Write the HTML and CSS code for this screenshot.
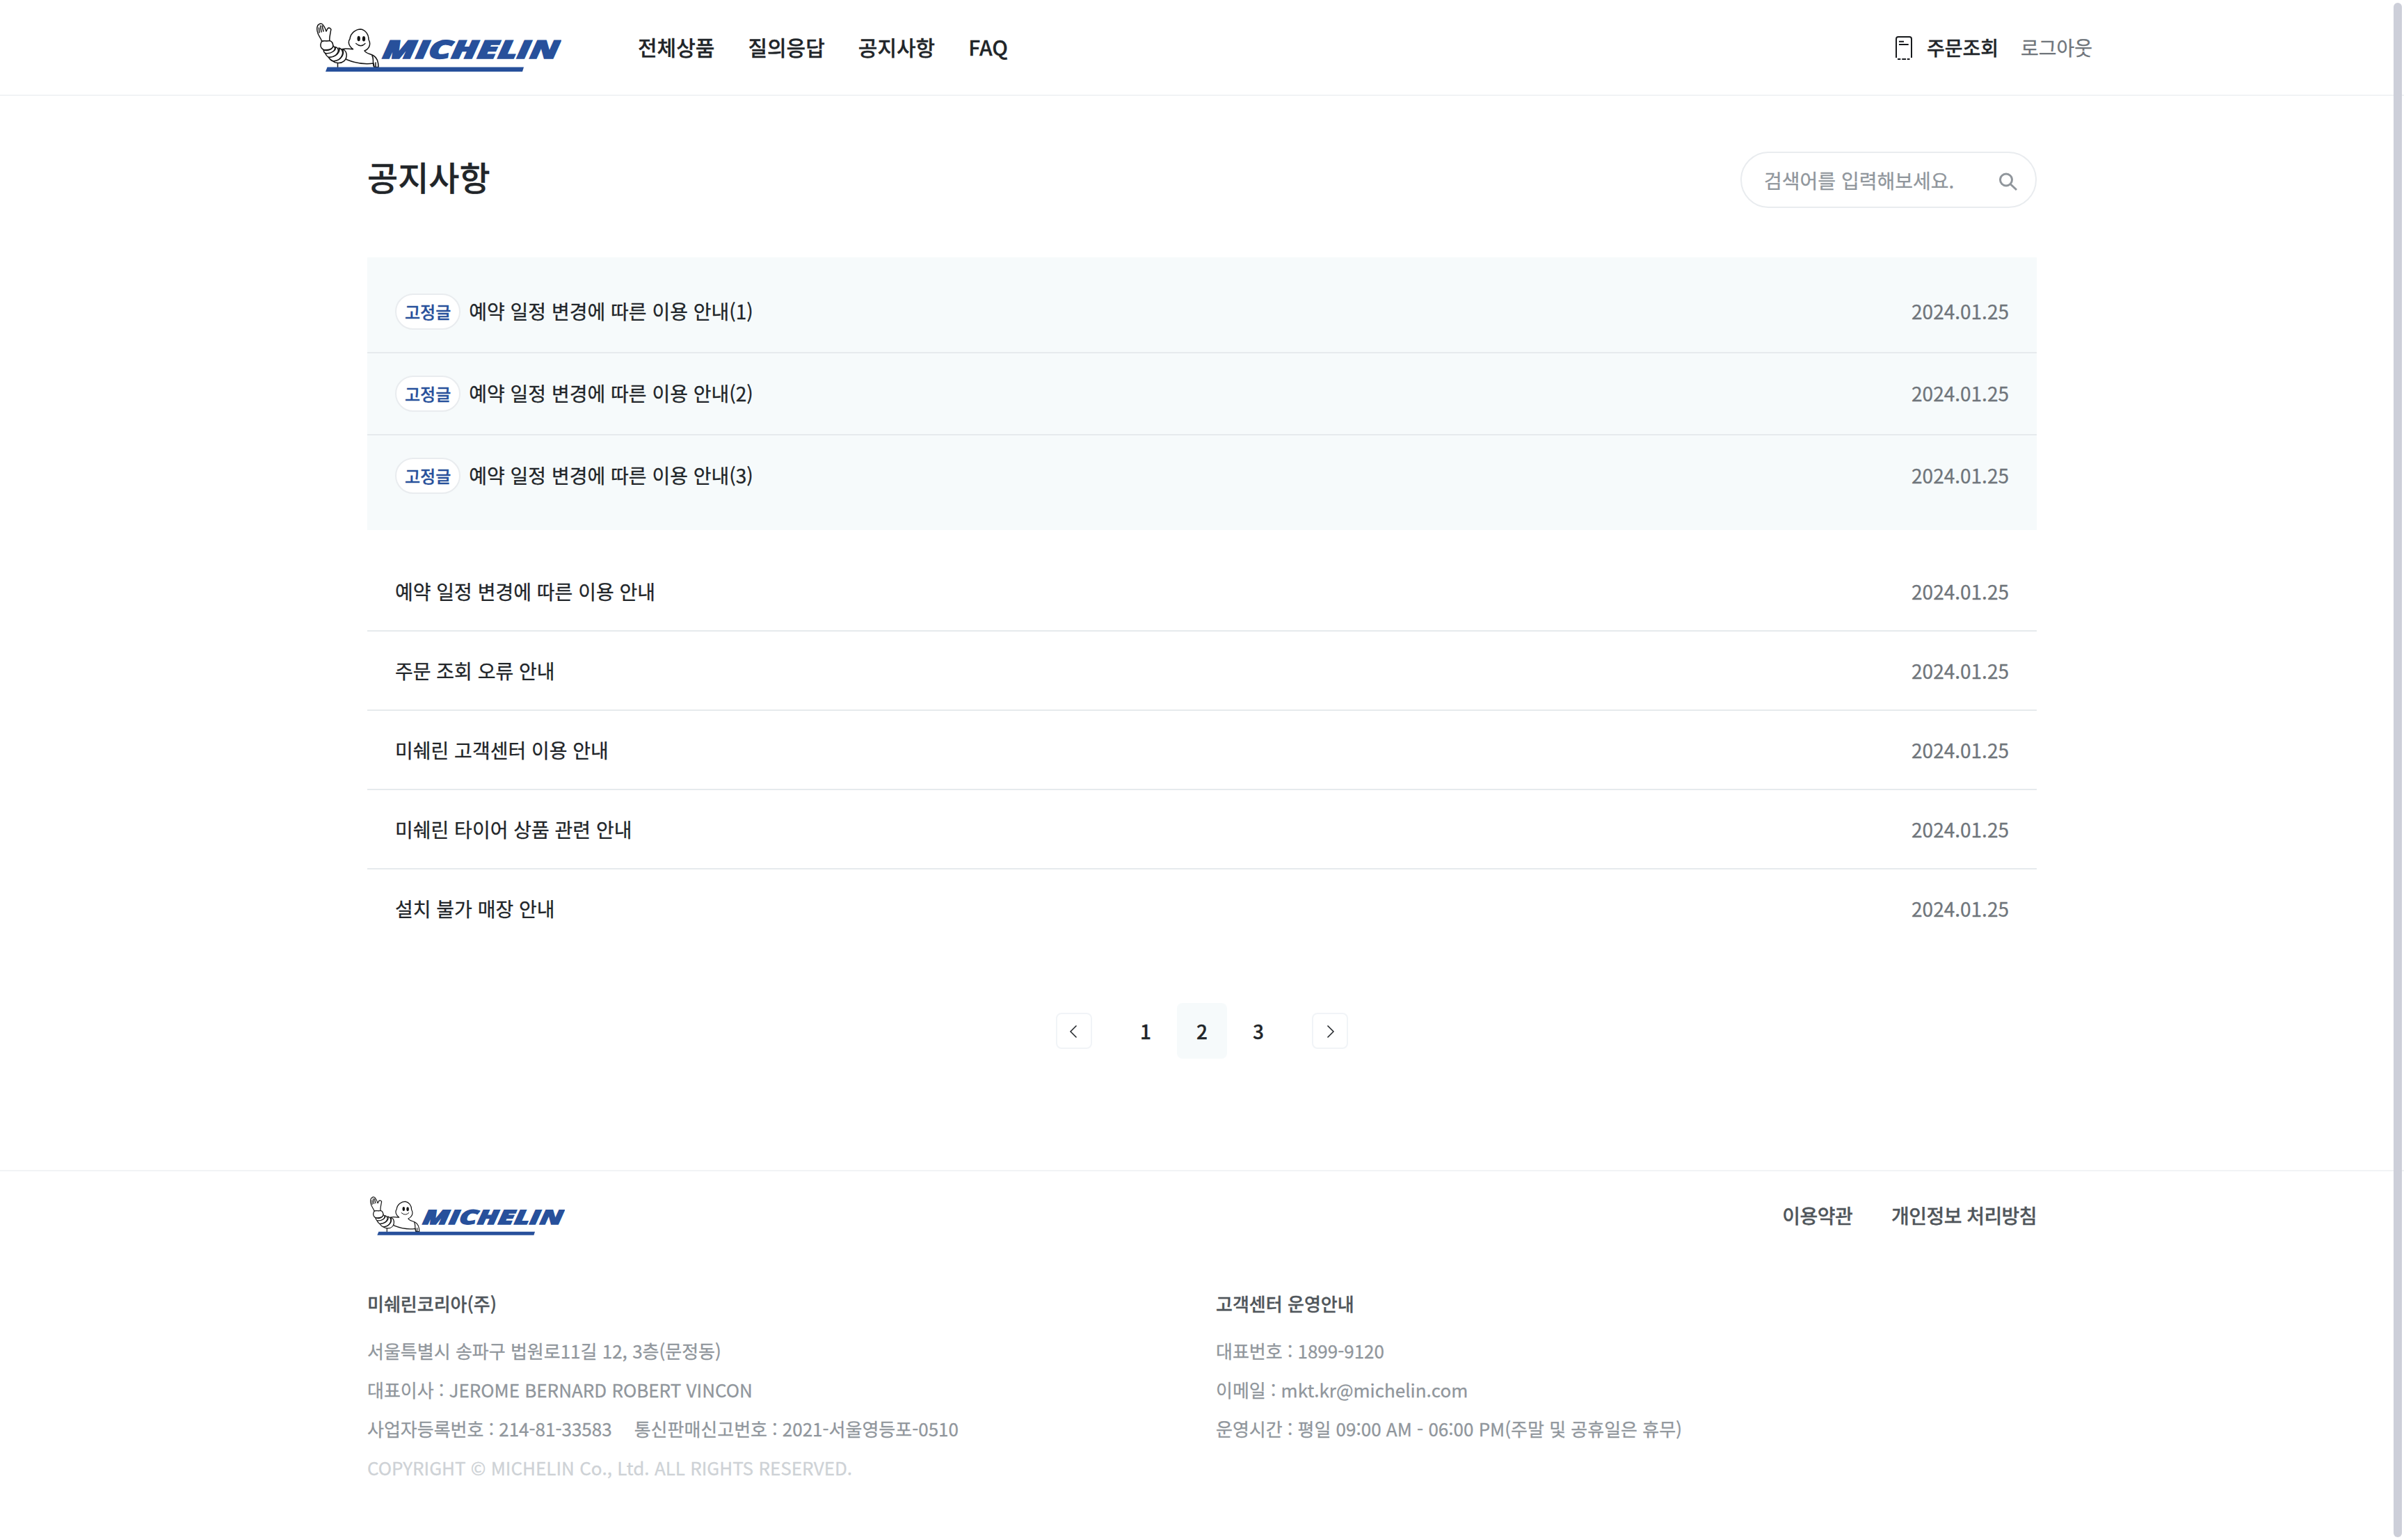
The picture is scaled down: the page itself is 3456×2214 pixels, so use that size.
FILE: index.html
```html
<!DOCTYPE html>
<html lang="ko">
<head>
<meta charset="utf-8">
<title>공지사항</title>
<link rel="stylesheet" href="styles.css">
</head>
<body>
<svg class="sprite" aria-hidden="true">
  <symbol id="logo" viewBox="0 0 352 70">
    <g fill="#fff" stroke="#151515" stroke-width="1.5" stroke-linejoin="round" stroke-linecap="round">
      <path d="M30.500 64V55H46V64Z" stroke="none"/>
      <path fill="none" d="M30.500 56V63.500"/>
      <path d="M38 37.500C43 36 48 38 52.500 37.700C46 33 45 27 48 23C49 14 57 9 63.500 9C70 10 75 16 75 24C79 31 75 38 69 40C71 44 77 44 82 47C87 50 89 57 89 63.500H83L82 58C68 60 54 57 43 52.500Z"/>
      <path d="M7.500 26C6 21 2 18 1.500 13C0 8 1 3 3.500 2C6 0 9 1 10 4C12 6 13 9 14 12L16 8C18 6 22 8 20.500 11C20 16 18 21 19 26Z"/>
      <path d="M6.700 28C8 24 15 27 18.500 25.500C23 26 24 31 24 35C20 39 14 39 10 38.500C6 36 5 32 6.700 28Z"/>
      <path d="M10 38.500C16 41 23 38 24 33C31 37 22 46 12.500 43.500C10.500 42 10 40 10 38.500Z"/>
      <path d="M12.500 43.500C21 45 29 39 27 34.500C35 36 32 49 17.500 49.500C15 48 13.500 46 12.500 43.500Z"/>
      <path d="M17.500 49.500C29 49 35 41 32 36C42 38 38 54 24 55C21 54 19 52 17.500 49.500Z"/>
      <path d="M24 55C36 54 41 44 37 37.500C47 40 45 58 31.500 57.500C29 57.500 26 57 24 55Z"/>
      <path fill="none" d="M4 14L3.500 7M7 13L5.500 4M10 12L8 4M80 47C83 52 80 56 82.500 63M85 57V63"/>
      <path fill="none" stroke-width="1.2" d="M56.700 29.500Q64 36 70 29.500"/>
    </g>
    <ellipse cx="60.700" cy="22.500" rx="2.200" ry="3.800" fill="#151515"/>
    <ellipse cx="68" cy="22.700" rx="2.200" ry="3.800" fill="#151515"/>
    <path fill="#27509b" d="M15.500 63.500H298L296 70H13Z"/>
    <text class="wordmark" transform="translate(94 50.700) skewX(-8)" x="0" y="0" textLength="253" lengthAdjust="spacingAndGlyphs">MICHELIN</text>
  </symbol>
</svg>

<header class="header">
  <div class="header-inner">
    <a class="logo"><svg><use href="#logo"/></svg></a>
    <nav class="nav"><a>전체상품</a><a>질의응답</a><a>공지사항</a><a>FAQ</a></nav>
    <div class="user">
      <svg class="order-icon" viewBox="0 0 24 34" fill="none" stroke="#17191c" stroke-width="2"><path d="M1 31V4Q1 1 4 1H20Q23 1 23 4V31M5 7.700H12M5 12H18.700M3 33H7.300M9.300 33H15M16.700 33H20.500"/></svg>
      <a class="order">주문조회</a>
      <a class="logout">로그아웃</a>
    </div>
  </div>
</header>

<main class="main">
  <div class="title-row">
    <h1>공지사항</h1>
    <div class="search">
      <span>검색어를 입력해보세요.</span>
      <svg viewBox="0 0 28 28" fill="none" stroke="#90969c" stroke-width="3"><circle cx="11" cy="13.500" r="8.500"/><path d="M17 19.500L26 28"/></svg>
    </div>
  </div>

  <ul class="list pinned">
    <li><span class="badge">고정글</span><a>예약 일정 변경에 따른 이용 안내(1)</a><time>2024.01.25</time></li>
    <li><span class="badge">고정글</span><a>예약 일정 변경에 따른 이용 안내(2)</a><time>2024.01.25</time></li>
    <li><span class="badge">고정글</span><a>예약 일정 변경에 따른 이용 안내(3)</a><time>2024.01.25</time></li>
  </ul>
  <ul class="list normal">
    <li><a>예약 일정 변경에 따른 이용 안내</a><time>2024.01.25</time></li>
    <li><a>주문 조회 오류 안내</a><time>2024.01.25</time></li>
    <li><a>미쉐린 고객센터 이용 안내</a><time>2024.01.25</time></li>
    <li><a>미쉐린 타이어 상품 관련 안내</a><time>2024.01.25</time></li>
    <li><a>설치 불가 매장 안내</a><time>2024.01.25</time></li>
  </ul>

  <div class="pagination">
    <a class="arrow prev"><svg viewBox="0 0 10 18"><path d="M9.500 0.500L1 9L9.500 17.500"/></svg></a>
    <div class="pages"><a>1</a><a class="active">2</a><a>3</a></div>
    <a class="arrow next"><svg viewBox="0 0 10 18"><path d="M0.500 0.500L9 9L0.500 17.500"/></svg></a>
  </div>
</main>

<footer class="footer">
  <div class="footer-inner">
    <div class="footer-top">
      <a class="footer-logo"><svg><use href="#logo"/></svg></a>
      <div class="links"><a>이용약관</a><a>개인정보 처리방침</a></div>
    </div>
    <div class="info">
      <section>
        <h2>미쉐린코리아(주)</h2>
        <p>서울특별시 송파구 법원로11길 12, 3층(문정동)</p>
        <p>대표이사 : JEROME BERNARD ROBERT VINCON</p>
        <p class="split"><span>사업자등록번호 : 214-81-33583</span><span>통신판매신고번호 : 2021-서울영등포-0510</span></p>
        <p class="copyright">COPYRIGHT © MICHELIN Co., Ltd. ALL RIGHTS RESERVED.</p>
      </section>
      <section>
        <h2>고객센터 운영안내</h2>
        <p>대표번호 : 1899-9120</p>
        <p>이메일 : mkt.kr@michelin.com</p>
        <p>운영시간 : 평일 09:00 AM - 06:00 PM(주말 및 공휴일은 휴무)</p>
      </section>
    </div>
  </div>
</footer>
<div class="scrollbar"></div>
</body>
</html>
```
FILE: styles.css
```css
* { box-sizing: border-box; }
body {
  margin: 0;
  height: 2214px;
  overflow: hidden;
  background: #fff;
  color: #212529;
  font-family: "Noto Sans CJK KR", sans-serif;
  font-size: 28px;
  line-height: 48px;
  -webkit-text-stroke-width: 0.3px;
}
h1, h2, p, ul { margin: 0; padding: 0; }
ul { list-style: none; }
svg { display: block; overflow: visible; }
.sprite { position: absolute; width: 0; height: 0; }
.wordmark { font: italic 900 36px "Open Sans", sans-serif; fill: #27509b; stroke: #27509b; stroke-width: 1.6px; }

.header { height: 138px; border-bottom: 2px solid #f1f3f5; }
.header-inner { width: 2560px; height: 136px; margin: 0 auto; display: flex; align-items: center; }
.logo { margin-left: 7px; width: 352px; }
.logo svg { width: 352px; height: 70px; }
.nav { display: flex; gap: 48px; margin-left: 110px; padding-bottom: 2px; font-size: 30px; font-weight: 500; }
.user { display: flex; align-items: center; margin-left: auto; }
.order-icon { width: 24px; height: 34px; margin: 2px 21px 0 0; }
.order { font-weight: 500; margin-right: 32px; }
.logout { color: #6f757b; }

.main { width: 2400px; margin: 0 auto; }
.title-row { height: 232px; padding-top: 80px; display: flex; justify-content: space-between; align-items: flex-start; }
h1 { font-size: 48px; font-weight: 500; line-height: 70px; }
.search {
  width: 426px; height: 81px; padding: 0 25px 0 32px;
  border: 2px solid #e9ecef; border-radius: 41px;
  display: flex; align-items: center; justify-content: space-between; color: #90969c;
}
.search svg { width: 28px; height: 28px; }

.list li { display: flex; align-items: center; padding: 0 40px; }
.list li + li { border-top: 2px solid #e6eaed; }
.list time { margin-left: auto; color: #6f757b; }
.pinned { padding: 20px 0; background: #f6fafb; }
.pinned li { height: 118px; }
.pinned li:first-child { height: 116px; }
.pinned a, .pinned time { padding-bottom: 3px; }
.badge {
  height: 52px; margin-right: 12px; padding: 0 12px; border: 2px solid #e9ecef; border-radius: 26px;
  background: #fff; color: #27509b; font-size: 24px; font-weight: 500; line-height: 48px;
}
.normal { margin-top: 32px; }
.normal li { height: 114px; }
.normal li:first-child { height: 112px; }

.pagination { height: 80px; margin-top: 80px; display: flex; justify-content: center; align-items: center; gap: 41px; }
.pages { display: flex; gap: 9px; font-weight: 500; }
.pages a { width: 72px; height: 80px; line-height: 80px; text-align: center; border-radius: 8px; }
.pages .active { background: #f6fafb; }
.arrow { width: 52px; height: 52px; display: flex; align-items: center; justify-content: center; border: 2px solid #f1f4f7; border-radius: 8px; }
.arrow svg { width: 10px; height: 18px; margin-top: 2px; fill: none; stroke: #212529; stroke-width: 1.500; }
.prev svg { margin-right: 2px; }
.next svg { margin-left: 2px; }

.footer { margin-top: 160px; border-top: 2px solid #f1f3f5; }
.footer-inner { width: 2400px; margin: 0 auto; padding-top: 36px; }
.footer-top { height: 56px; display: flex; align-items: center; justify-content: space-between; color: #50565b; font-weight: 500; }
.footer-logo { margin-left: 4px; }
.footer-logo svg { width: 280px; height: 56px; }
.links { display: flex; gap: 56px; padding-bottom: 3px; letter-spacing: -0.02em; }
.info { display: grid; grid-template-columns: 1fr 1fr; gap: 40px; margin-top: 78px; font-size: 26px; line-height: 40px; color: #90969c; }
.info h2 { margin-bottom: 28px; font-size: 26px; font-weight: 500; color: #50565b; }
.info p { margin-bottom: 16px; }
.split { display: flex; gap: 32px; }
.info .copyright { color: #ced2d6; }

.scrollbar { position: fixed; top: 4px; right: 3px; width: 12px; height: 2206px; border-radius: 6px; background: #cdcfd9; }
```
